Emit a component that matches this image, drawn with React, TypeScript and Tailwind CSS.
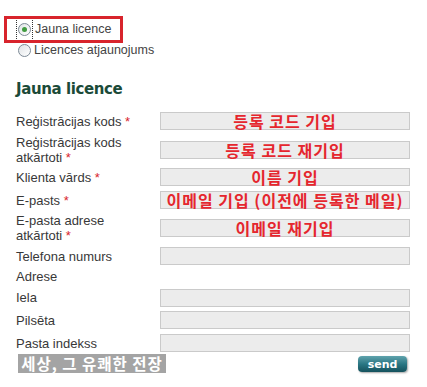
import React from "react";

const label = "font-['Liberation_Sans',Arial,sans-serif] text-[13px] leading-[15px] text-[#383838]";
const ko = "font-['Noto_Sans_CJK_KR',sans-serif] font-bold text-[16px] leading-none tracking-[1px] text-[#e5262e]";

type Row = { text: string[]; req?: boolean; hint?: string; h: string; input?: boolean };

const rows: Row[] = [
  { text: ["Reģistrācijas kods"], req: true, hint: "등록 코드 기입", h: "h-[28px]", input: true },
  { text: ["Reģistrācijas kods", "atkārtoti"], req: true, hint: "등록 코드 재기입", h: "h-[29px]", input: true },
  { text: ["Klienta vārds"], req: true, hint: "이름 기입", h: "h-[26px]", input: true },
  { text: ["E-pasts"], req: true, hint: "이메일 기입 (이전에 등록한 메일)", h: "h-[20px]", input: true },
  { text: ["E-pasta adrese", "atkārtoti"], req: true, hint: "이메일 재기입", h: "h-[36px]", input: true },
  { text: ["Telefona numurs"], h: "h-[20px]", input: true },
  { text: ["Adrese"], h: "h-[20px]" },
  { text: ["Iela"], h: "h-[23px]", input: true },
  { text: ["Pilsēta"], h: "h-[22px]", input: true },
  { text: ["Pasta indekss"], h: "h-[24px]", input: true },
];

function Radio({ checked }: { checked?: boolean }) {
  return (
    <span className="flex h-[13px] w-[13px] items-center justify-center rounded-full border border-[#7d8a96] bg-gradient-to-br from-[#dfe3e6] to-white">
      {checked && <span className="h-[5px] w-[5px] rounded-full bg-[#3f9a3f]" />}
    </span>
  );
}

export default function App() {
  return (
    <div className="relative h-[387px] w-[427px] overflow-hidden bg-white">
      <div className="px-[16px] pt-[16px]">
        <div className="relative">
          <div className="absolute left-[-12px] top-0 h-[27px] w-[119px] border-[3px] border-[#d8242c]" />
          <label className="flex h-[26px] items-center gap-[2px]">
            <span className="flex h-[24px] items-center border border-dotted border-[#333] px-[1px]">
              <Radio checked />
            </span>
            <span className="font-['Liberation_Sans',Arial,sans-serif] text-[12.5px] leading-[15px] text-[#444]">Jauna licence</span>
          </label>
        </div>
        <label className="flex h-[16px] items-center gap-[3px] pl-[2px]">
          <Radio />
          <span className="font-['Liberation_Sans',Arial,sans-serif] text-[12.5px] leading-[15px] text-[#444]">Licences atjaunojums</span>
        </label>
        <h2 className="mt-[22px] font-['DejaVu_Sans',Verdana,sans-serif] text-[15px] font-bold leading-[18px] tracking-[-0.4px] text-[#1b4a38]">
          Jauna licence
        </h2>
        <div className="mt-[9px]">
          {rows.map((r, i) => (
            <div key={i} className={"flex items-center " + r.h}>
              <div className={label + " w-[144px]"}>
                {r.text.map((t, j) => (
                  <div key={j}>
                    {t}
                    {r.req && j === r.text.length - 1 && <span className="text-[#d8242c]"> *</span>}
                  </div>
                ))}
              </div>
              {r.input && (
                <div className="flex h-[18px] w-[250px] items-center justify-center overflow-visible whitespace-nowrap border border-[#cacaca] bg-[#ececec]">
                  {r.hint && <span className={ko + (r.hint.length > 12 ? " tracking-[1.2px]" : "")}>{r.hint}</span>}
                </div>
              )}
            </div>
          ))}
        </div>
        <div className="mt-[1px] flex justify-end pr-[4px]">
          <button className="h-[16px] w-[49px] rounded-[4px] bg-gradient-to-b from-[#5fa3ad] via-[#2a7784] to-[#15525d] font-['DejaVu_Sans',Verdana,sans-serif] text-[11px] font-bold leading-none text-white shadow-[1px_1px_2px_rgba(0,0,0,0.35)]">
            send
          </button>
        </div>
      </div>
      <div className="absolute left-[18px] top-[354px] flex h-[19px] w-[148px] items-center justify-center whitespace-nowrap bg-[#a4a4a4] font-['Noto_Sans_CJK_KR',sans-serif] text-[15.5px] font-bold leading-none tracking-[1px] text-white">
        세상, 그 유쾌한 전장
      </div>
    </div>
  );
}
